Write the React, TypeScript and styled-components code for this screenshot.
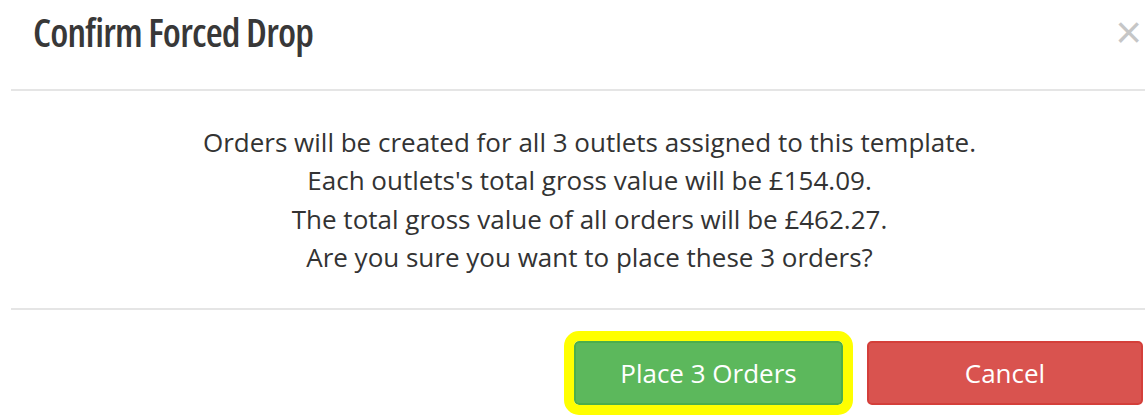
import React from 'react';
import styled, { createGlobalStyle } from 'styled-components';

const GlobalStyle = createGlobalStyle`
  html, body {
    margin: 0;
    padding: 0;
    background: #fff;
  }
  body {
    font-family: "Open Sans", "Noto Sans", sans-serif;
    color: #333;
  }
`

const Viewport = styled.div`
  width: 1145px;
  height: 415px;
  overflow: hidden;
`

const Modal = styled.div`
  width: 1157px;
  margin-left: 11px;
`

const Header = styled.div`
  display: flex;
  justify-content: space-between;
  align-items: flex-start;
  height: 89px;
  padding: 0 26px 0 22px;
  border-bottom: 2px solid #e5e5e5;
`

const Title = styled.h4`
  margin: 0;
  padding-top: 8px;
  font-family: "Open Sans", sans-serif;
  font-stretch: 75%;
  font-weight: 600;
  font-size: 39px;
  letter-spacing: -0.8px;
  line-height: 48px;
  color: #383838;
`

const Close = styled.button`
  margin: 0;
  padding: 0;
  margin-top: 9px;
  background: none;
  border: 0;
  font-family: "Liberation Sans", Arial, sans-serif;
  font-weight: normal;
  font-size: 46px;
  line-height: 46px;
  color: #000;
  opacity: 0.22;
`

const Body = styled.div`
  height: 217px;
  box-sizing: border-box;
  padding-top: 32px;
  text-align: center;
  font-size: 26px;
  line-height: 38.3px;
`

const Footer = styled.div`
  display: flex;
  justify-content: flex-end;
  gap: 24px;
  padding: 31px 25px 0;
  border-top: 2px solid #e5e5e5;
`

const Button = styled.button<{ variant: 'success' | 'danger'; focused?: boolean }>`
  box-sizing: border-box;
  height: 64px;
  margin: 0;
  padding: 0;
  border-radius: 5px;
  font-family: "Open Sans", "Noto Sans", sans-serif;
  font-size: 26px;
  color: #fff;
  background: ${props => props.variant === 'success' ? '#5cb85c' : '#d9534f'};
  border: 2px solid ${props => props.variant === 'success' ? '#4cae4c' : '#d43f3a'};
  width: ${props => props.variant === 'success' ? '269px' : '276px'};
  outline: ${props => props.focused ? '10px solid #ffff00' : 'none'};
`

export default function App() {
  return (
    <Viewport>
      <GlobalStyle />
      <Modal>
        <Header>
          <Title>Confirm Forced Drop</Title>
          <Close aria-label="Close">×</Close>
        </Header>
        <Body>
          Orders will be created for all 3 outlets assigned to this template.<br />
          Each outlets's total gross value will be £154.09.<br />
          The total gross value of all orders will be £462.27.<br />
          Are you sure you want to place these 3 orders?
        </Body>
        <Footer>
          <Button variant="success" focused>Place 3 Orders</Button>
          <Button variant="danger">Cancel</Button>
        </Footer>
      </Modal>
    </Viewport>
  )
}
